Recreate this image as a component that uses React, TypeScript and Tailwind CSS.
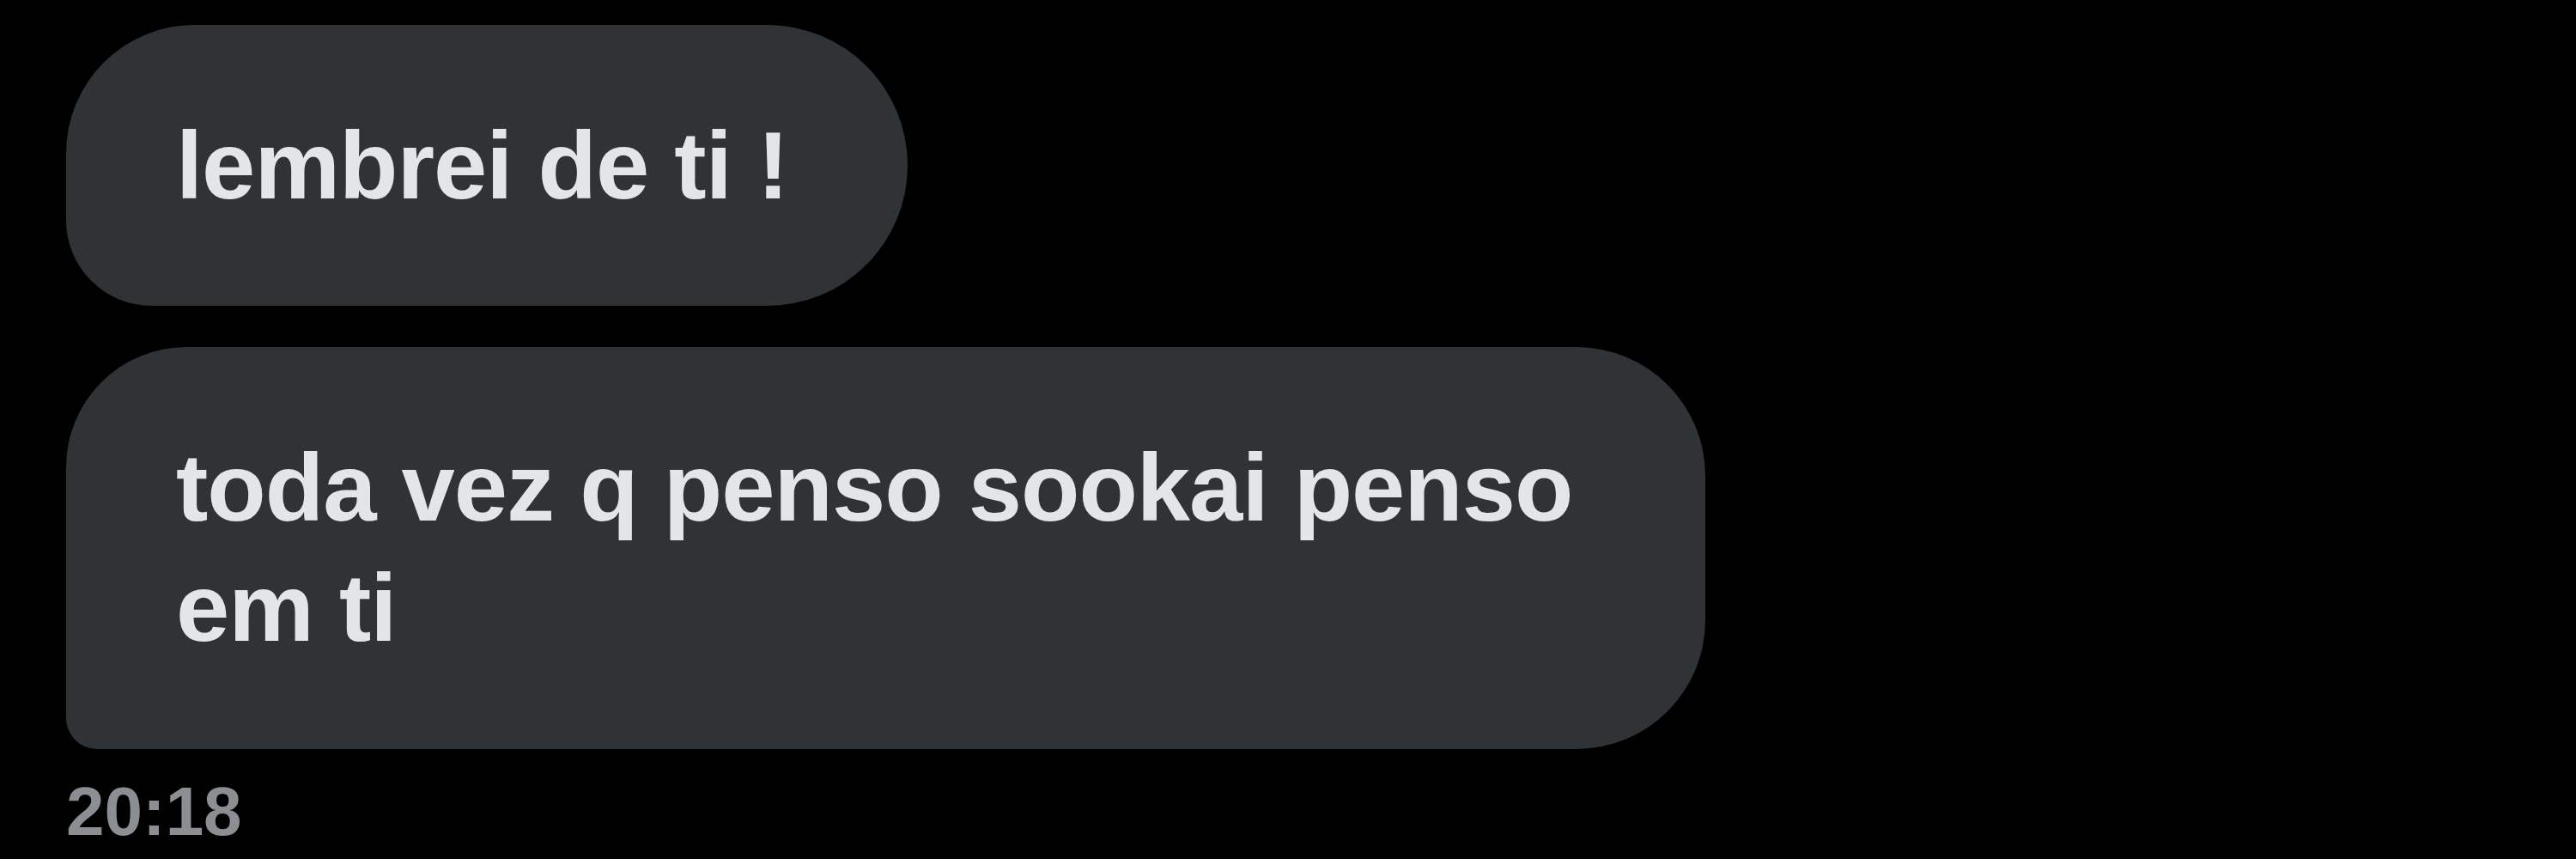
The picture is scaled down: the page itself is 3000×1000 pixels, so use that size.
import React from "react";

const Bubble: React.FC<{ className: string; children: React.ReactNode }> = ({
  className,
  children,
}) => {
  return (
    <div
      className={`bg-[#303336] text-[#e3e5e8] font-bold text-[112px] leading-[140px] tracking-[-1px] py-[94px] pl-[128px] ${className}`}
    >
      {children}
    </div>
  );
};

export default function App() {
  return (
    <div
      className="w-[3000px] h-[1000px] bg-black overflow-hidden flex flex-col items-start pl-[77px] pt-[29px]"
      style={{ fontFamily: '"Liberation Sans", Arial, sans-serif' }}
    >
      <Bubble className="w-[980px] h-[327px] rounded-tl-[150px] rounded-bl-[100px] rounded-r-[164px]">
        lembrei de ti !
      </Bubble>

      <Bubble className="mt-[48px] w-[1909px] h-[468px] pr-[120px] rounded-tl-[140px] rounded-bl-[36px] rounded-r-[150px]">
        toda vez q penso sookai penso em ti
      </Bubble>

      <span className="mt-[33px] text-[80px] leading-[80px] font-bold text-[#8b8e92]">
        20:18
      </span>
    </div>
  );
}
